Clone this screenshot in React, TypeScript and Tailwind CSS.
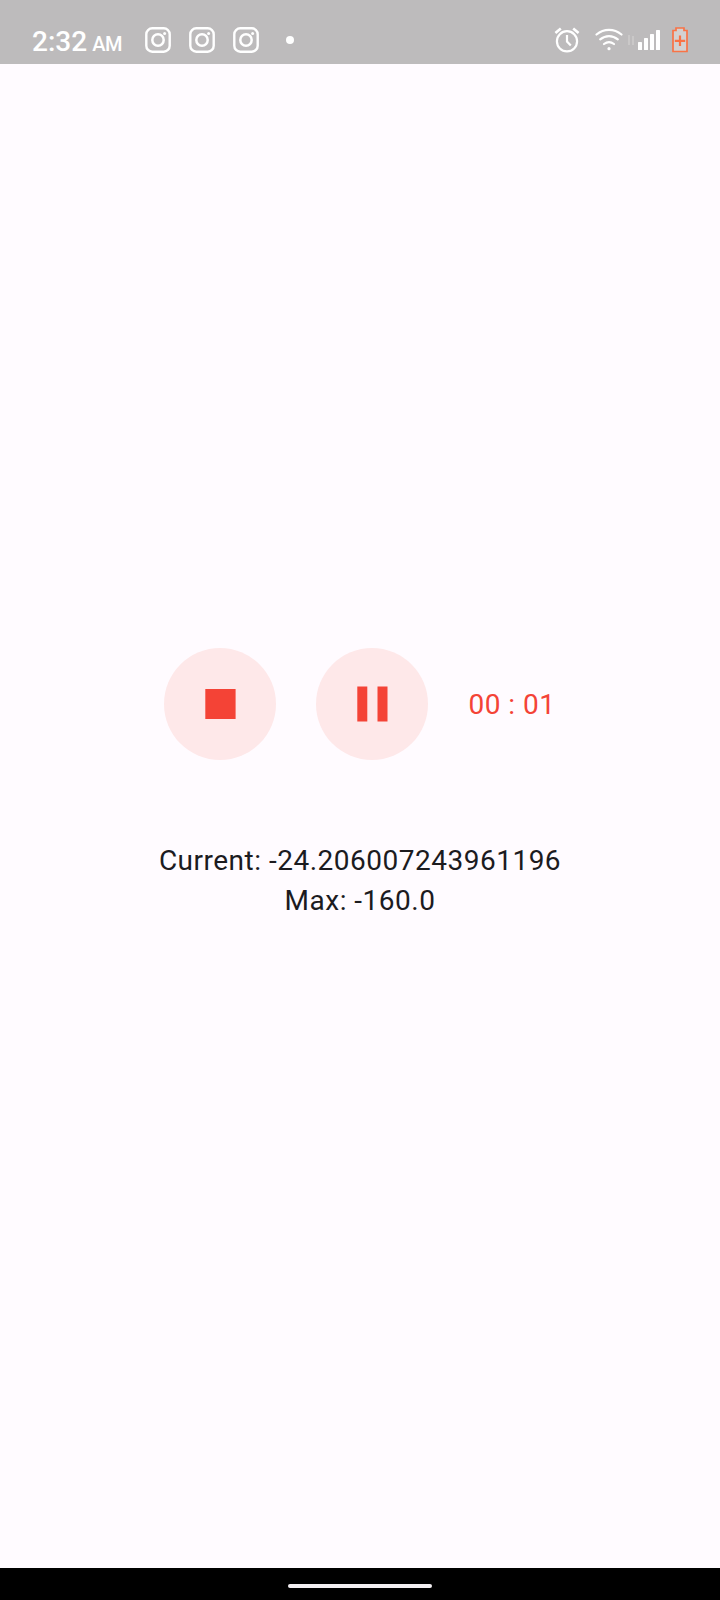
const InstagramIcon = () => (
  <svg width="26" height="26" viewBox="0 0 26 26" fill="none" stroke="#fff" className="shrink-0">
    <rect x="1.3" y="1.3" width="23.4" height="23.4" rx="6" strokeWidth="2.4" />
    <circle cx="13" cy="13" r="5.7" strokeWidth="2.5" />
    <circle cx="19.6" cy="6.4" r="1.5" fill="#fff" stroke="none" />
  </svg>
);

const AlarmIcon = () => (
  <svg width="26" height="26" viewBox="0 0 26 26" fill="none" stroke="#fff" className="shrink-0">
    <circle cx="13" cy="14.3" r="10.1" strokeWidth="2.2" />
    <path d="M1.4 6 6.8 1.5M24.6 6 19.2 1.5" strokeWidth="2.6" />
    <path d="M13 8v6.6l3.8 4" strokeWidth="2.2" />
  </svg>
);

const WifiIcon = () => (
  <svg width="28" height="24" viewBox="0 0 28 24" fill="none" stroke="#fff" strokeWidth="2.2" strokeLinecap="round" className="shrink-0">
    <path d="M1.5 6.5C9 .2 19 .2 26.5 6.5" />
    <path d="M5.2 11.4c5.400-4.500 12.200-4.500 17.600 0" />
    <path d="M9 16c3.200-2.500 6.800-2.500 10 0" />
    <circle cx="14" cy="20.7" r="1.6" fill="#fff" stroke="none" />
  </svg>
);

const SignalIcon = () => (
  <svg width="34" height="22" viewBox="0 0 34 22" className="shrink-0">
    <path d="M1 6h2v10H1zM5 7h2v9H5z" fill="#cac8c8" />
    <g fill="#fff">
      <rect x="11" y="13" width="4" height="8" rx=".6" />
      <rect x="17" y="9" width="4" height="12" rx=".6" />
      <rect x="23" y="5" width="4" height="16" rx=".6" />
      <rect x="29" y="1" width="4" height="20" rx=".6" />
    </g>
  </svg>
);

const BatteryIcon = () => (
  <svg width="18" height="28" viewBox="0 0 18 28" fill="none" stroke="#f97346" className="shrink-0">
    <path d="M2 4.5h3V2h8v2.5h3V25.5H2z" fill="#d3d1d1" strokeWidth="1.7" />
    <path d="M9 9.5v10.5M3.8 14.8h10.400" strokeWidth="2.2" />
  </svg>
);

const StopIcon = () => (
  <svg width="60" height="60" viewBox="0 0 60 60" fill="#f44336">
    <path d="M15.300 15h30.300v30H15.300z" />
  </svg>
);

const PauseIcon = () => (
  <svg width="60" height="60" viewBox="0 0 60 60" fill="#f44336">
    <path d="M15.300 12.500h10v35h-10zM35.500 12.500h10v35h-10z" />
  </svg>
);

export default function App() {
  return (
    <div className="flex h-[1600px] w-[720px] flex-col overflow-hidden bg-[#fffbff] font-['Roboto',sans-serif]">
      <header className="flex h-16 shrink-0 items-center bg-[#bdbbbc] pt-4 text-white">
        <div className="ml-8 flex w-[113px] items-baseline whitespace-nowrap pt-[5px] leading-8">
          <span className="text-[28px] font-medium">2:32</span>
          <span className="ml-[5px] text-[20px] font-medium tracking-[-0.5px]">AM</span>
        </div>
        <div className="flex items-center gap-[18px]">
          <InstagramIcon />
          <InstagramIcon />
          <InstagramIcon />
        </div>
        <span className="ml-[27px] size-2 rounded-full bg-white" />
        <div className="ml-auto mr-[31px] flex items-center">
          <AlarmIcon />
          <span className="ml-[15px] flex">
            <WifiIcon />
          </span>
          <span className="ml-1 flex">
            <SignalIcon />
          </span>
          <span className="ml-[10px] flex">
            <BatteryIcon />
          </span>
        </div>
      </header>

      <main className="flex flex-1 flex-col items-center pt-[584px] text-[28px] leading-10 tracking-[0.5px] text-[#1c1b1f]">
        <div className="flex items-center gap-10 text-[#f44336]">
          <button type="button" aria-label="Stop" className="flex size-28 items-center justify-center rounded-full bg-[#fee8e9]">
            <StopIcon />
          </button>
          <button type="button" aria-label="Pause" className="flex size-28 items-center justify-center rounded-full bg-[#fee8e9]">
            <PauseIcon />
          </button>
          <span className="whitespace-nowrap pt-0.5">00 : 01</span>
        </div>
        <div className="mt-[81px] text-center">
          <p>Current: -24.206007243961196</p>
          <p>Max: -160.0</p>
        </div>
      </main>

      <footer className="flex h-8 shrink-0 justify-center bg-black pt-4">
        <span className="h-1 w-36 rounded-full bg-[#f3eff2]" />
      </footer>
    </div>
  );
}
